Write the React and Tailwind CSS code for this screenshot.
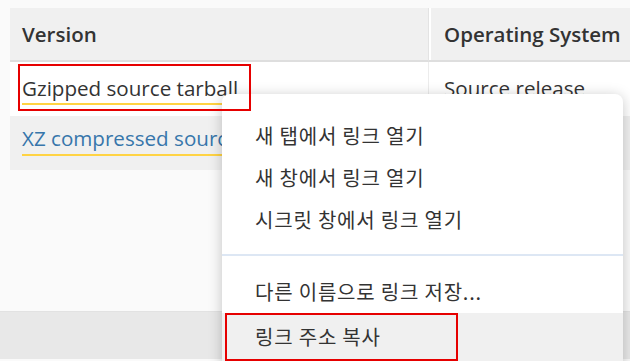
export default function App() {
  const menuItems = [
    '새 탭에서 링크 열기',
    '새 창에서 링크 열기',
    '시크릿 창에서 링크 열기',
  ];

  return (
    <div className="relative w-[630px] h-[361px] overflow-hidden bg-[#fafafa] font-['Open_Sans',sans-serif] text-[#333]">
      {/* downloads table */}
      <div className="pt-[8px] pl-[10px]">
        <div className="grid grid-cols-[418px_3px_260px] w-[681px]">
          <div className="h-[54px] flex items-center pl-[12px] bg-[#f0f0f0] border-b-2 border-[#dedede] text-[20.5px] font-semibold">
            Version
          </div>
          <div className="h-[54px] bg-white border-l border-[#e3e3e3] border-b-2 border-b-[#dedede]" />
          <div className="h-[54px] flex items-center pl-[13px] bg-[#f0f0f0] border-b-2 border-[#dedede] text-[20.5px] font-semibold">
            Operating System
          </div>

          <div className="h-[54px] pt-[13px] pl-[12px] bg-white text-[20.6px] leading-[26px]">
            <span className="relative">
              Gzipped source tarball
              <span className="absolute left-0 bottom-[-3px] h-[2px] w-[203px] bg-[#ffd343]" />
            </span>
          </div>
          <div className="h-[54px] bg-white border-l border-[#ececec]" />
          <div className="h-[54px] pt-[13px] pl-[13px] bg-white text-[20.6px] leading-[26px]">
            Source release
          </div>

          <div className="h-[54px] pt-[9px] pl-[12px] bg-[#f0f0f0] text-[20.6px] leading-[26px] text-[#3776ab]">
            <span className="relative">
              XZ compressed source tarball
              <span className="absolute left-0 bottom-[-4px] right-0 h-[2px] bg-[#ffd343]" />
            </span>
          </div>
          <div className="h-[54px] bg-white border-l border-[#ececec]" />
          <div className="h-[54px] pt-[9px] pl-[13px] bg-[#f0f0f0] text-[20.6px] leading-[26px]">
            Source release
          </div>
        </div>
      </div>

      <div className="mt-[141px] h-[48px] bg-[#e8e8e8] border-t border-[#e2e2e2]" />

      {/* context menu */}
      <div className="absolute left-[222px] top-[94px] w-[401px] h-[290px] rounded-[8px] bg-white shadow-[0_2px_14px_rgba(0,0,0,0.22)] pt-[21px] font-['Noto_Sans_CJK_KR','Noto_Sans',sans-serif] text-[20px] text-[#333]">
        {menuItems.map((label) => (
          <div key={label} className="h-[42px] flex items-center pl-[33px] tracking-[0.8px]">
            {label}
          </div>
        ))}
        <div className="mt-[13px] mb-[15px] h-[2px] bg-[#dde7f4]" />
        <div className="h-[42px] flex items-center pl-[33px] tracking-[0.8px]">
          다른 이름으로 링크 저장...
        </div>
        <div className="h-[48px] flex items-center pl-[33px] tracking-[0.8px] bg-[#f0f0f0]">
          링크 주소 복사
        </div>
      </div>

      {/* annotation boxes */}
      <div className="absolute left-[18px] top-[64px] w-[233px] h-[47px] border-2 border-[#e60000]" />
      <div className="absolute left-[225px] top-[313px] w-[233px] h-[48px] border-2 border-[#e60000]" />
    </div>
  );
}
